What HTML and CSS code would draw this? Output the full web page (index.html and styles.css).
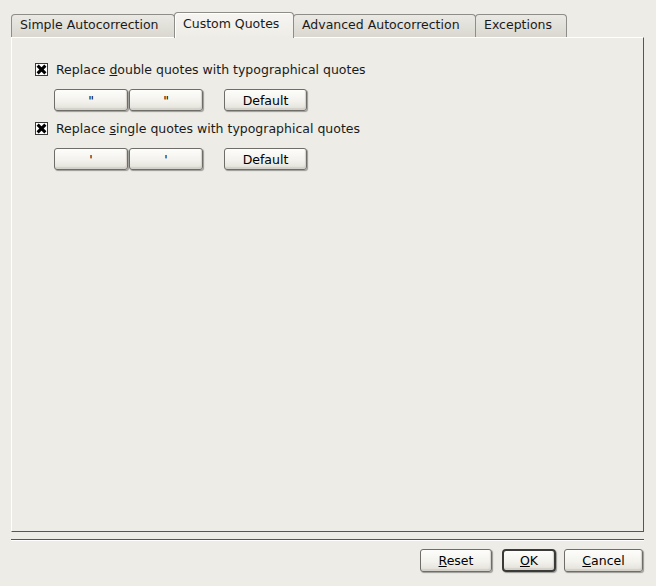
FILE: index.html
```html
<!DOCTYPE html>
<html lang="en">
<head>
    <meta charset="UTF-8">
    <title>AutoCorrect - Custom Quotes</title>
    <link rel="stylesheet" href="styles.css">
</head>
<body>

<div class="dialog">
    <!-- Tab strip -->
    <div class="tabs">
        <div class="tab first">Simple Autocorrection</div>
        <div class="tab active">Custom Quotes</div>
        <div class="tab advanced">Advanced Autocorrection</div>
        <div class="tab last">Exceptions</div>
    </div>

    <!-- Custom Quotes page -->
    <div class="panel">
        <label class="check-row">
            <span class="checkbox checked"></span>
            <span>Replace <u>d</u>ouble quotes with typographical quotes</span>
        </label>
        <div class="quote-row">
            <button class="btn quote">"</button>
            <button class="btn quote">"</button>
            <button class="btn default-btn">Default</button>
        </div>

        <label class="check-row">
            <span class="checkbox checked"></span>
            <span>Replace <u>s</u>ingle quotes with typographical quotes</span>
        </label>
        <div class="quote-row">
            <button class="btn quote">'</button>
            <button class="btn quote">'</button>
            <button class="btn default-btn">Default</button>
        </div>
    </div>

    <div class="separator"></div>

    <!-- Dialog buttons -->
    <div class="actions">
        <button class="btn action reset"><u>R</u>eset</button>
        <button class="btn action ok"><u>O</u>K</button>
        <button class="btn action cancel"><u>C</u>ancel</button>
    </div>
</div>

</body>
</html>
```

FILE: styles.css
```css
body {
    margin: 0;
    padding: 0;
    background-color: #edece6;
    font-family: 'DejaVu Sans', sans-serif;
    font-size: 12.5px;
    color: #1a1a1a;
}

.dialog {
    width: 656px;
    height: 586px;
    padding: 11px 12px 0 11px;
    box-sizing: border-box;
}

/* Tabs */
.tabs {
    display: flex;
    align-items: flex-end;
    height: 26px;
}

.tab {
    height: 23px;
    line-height: 20px;
    padding-left: 8px;
    border: 1px solid #8e8d87;
    border-bottom: none;
    border-radius: 4px 4px 0 0;
    background: linear-gradient(#eae9e3, #d9d7d0);
    white-space: nowrap;
    box-sizing: border-box;
}

.tab + .tab {
    margin-left: -1px;
}

.tab.first {
    width: 164px;
}

.tab.active {
    position: relative;
    width: 120px;
    height: 26px;
    line-height: 21px;
    background: linear-gradient(#f6f5f2, #edece6);
    z-index: 1;
    margin-bottom: -1px;
    box-shadow: inset 1px 1px 0 #ffffff;
}

.tab.advanced {
    width: 183px;
}

.tab.last {
    width: 92px;
}

.panel {
    height: 495px;
    border-top: 1px solid #ffffff;
    border-left: 1px solid #ffffff;
    border-right: 1px solid #555753;
    border-bottom: 1px solid #555753;
    padding: 22px 0 0 23px;
    box-sizing: border-box;
}

/* Check rows */
.check-row {
    display: flex;
    align-items: center;
    height: 18px;
    gap: 8px;
}

.checkbox {
    width: 11px;
    height: 11px;
    border: 1px solid #3a3a38;
    background: #ffffff;
    position: relative;
}

.checkbox.checked::before,
.checkbox.checked::after {
    content: "";
    position: absolute;
    left: 0px;
    top: 4px;
    width: 11px;
    height: 3px;
    background: #000;
}

.checkbox.checked::before {
    transform: rotate(45deg);
}

.checkbox.checked::after {
    transform: rotate(-45deg);
}

.quote-row {
    display: flex;
    margin: 11px 0 8px 19px;
}

/* Buttons */
.btn {
    font-family: 'DejaVu Sans', sans-serif;
    font-size: 12.5px;
    color: #000000;
    height: 22px;
    padding: 0;
    border: 1px solid #6e6d67;
    border-radius: 3px;
    background: linear-gradient(#fdfdfb, #f3f2ed 55%, #e2e0d8);
    box-shadow: 1px 1px 1px rgba(0, 0, 0, 0.35), inset -1px -2px 1px #d3d1c9;
}

.quote {
    width: 74px;
}

.quote + .quote {
    margin-left: 1px;
}

.default-btn {
    width: 83px;
    margin-left: 21px;
}

.separator {
    margin-top: 7px;
    height: 1px;
    background: #555753;
    border-bottom: 1px solid #ffffff;
}

.actions {
    display: flex;
    justify-content: flex-end;
    margin-top: 8px;
    gap: 8px;
    padding-right: 1px;
}

.action {
    height: 23px;
}

.reset {
    width: 72px;
    margin-right: 2px;
}

.ok {
    width: 54px;
    border: 2px solid #3a3a38;
    border-radius: 4px;
}

.cancel {
    width: 79px;
}
```
